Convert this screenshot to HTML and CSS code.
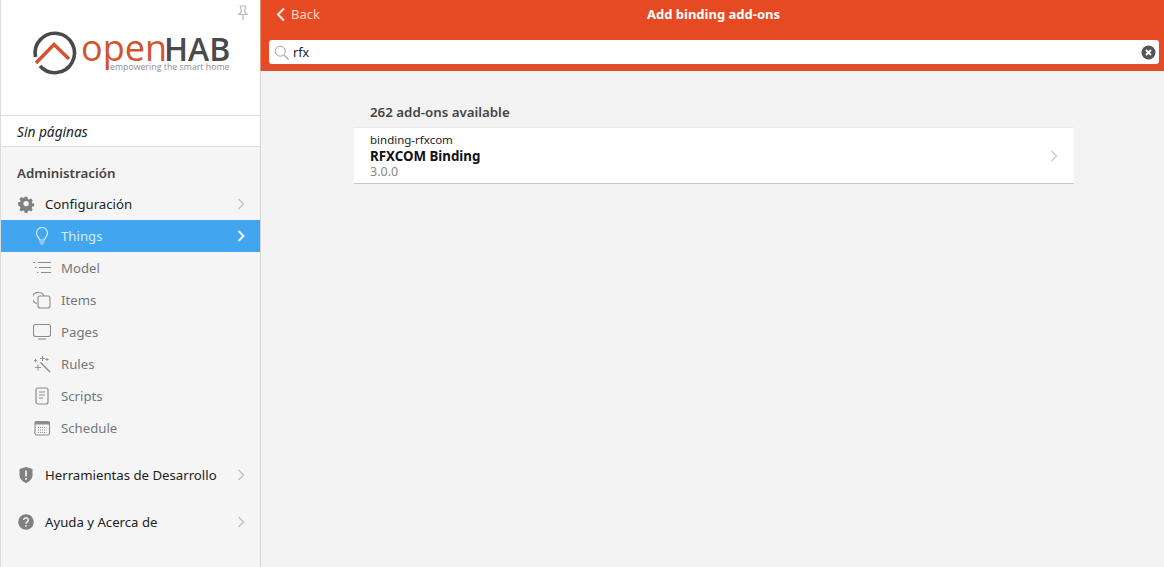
FILE: index.html
```html
<!DOCTYPE html>
<html lang="es">
<head>
<meta charset="utf-8">
<title>openHAB</title>
<link rel="stylesheet" href="styles.css">
</head>
<body>
<div class="app">
  <aside class="sidebar">
    <div class="logo-area">
      <svg class="pin" width="12" height="16" viewBox="0 0 12 16"><path d="M2.500 1h7M3.500 1.500 4.500 6.500 2 9.500h8L7.500 6.500 8.500 1.500M6 9.500V15" fill="none" stroke="#b9b9b9" stroke-width="1.200"/></svg>
      <svg class="logo" width="260" height="115" viewBox="0 0 260 115">
        <path d="M35.500 57A19.700 19.700 0 1 1 40 66" fill="none" stroke="#4a4a4a" stroke-width="3.600"/>
        <path d="M36 63 54 44.500 69 59" fill="none" stroke="#d2532e" stroke-width="3.400"/>
        <text class="logo-open" x="81" y="60.500">open</text>
        <text class="logo-hab" x="164" y="60.500">HAB</text>
        <text class="logo-tag" x="110" y="70">empowering the smart home</text>
      </svg>
    </div>
    <div class="pages-row">Sin páginas</div>
    <nav class="nav">
      <h2 class="nav-title">Administración</h2>
      <a class="row">
        <svg class="ico" width="18" height="18" viewBox="0 0 18 18"><path fill-rule="evenodd" d="M7.500 1.500h3l.5 2.300 1.300.6 2.100-1.200 2 2.100-1.200 2 .5 1.300 2.300.5v2.900l-2.300.5-.5 1.300 1.200 2-2 2.100-2.100-1.200-1.300.6-.5 2.300h-3l-.5-2.300-1.300-.6-2.100 1.200-2-2.100 1.200-2-.5-1.300L0 10.500V7.600l2.300-.5.500-1.300-1.200-2 2-2.100 2.100 1.200 1.300-.6zM9 6a3 3 0 1 0 0 6 3 3 0 0 0 0-6z" transform="translate(1 .5) scale(.9)" fill="#808080"/></svg>
        <span class="label">Configuración</span>
        <svg class="chev" width="8" height="12" viewBox="0 0 8 12"><path d="M1.500 1 6.500 6 1.500 11" fill="none" stroke="#c4c4c4" stroke-width="1.500"/></svg>
      </a>
      <a class="row sub active">
        <svg class="ico" width="18" height="18" viewBox="0 0 18 18"><path d="M6.500 13C6.300 10.500 3.500 9.500 3.500 6a5.500 5.500 0 0 1 11 0c0 3.500-2.800 4.500-3 7zM6.500 15h5M7.500 17h3" fill="none" stroke="#d4eeff" stroke-width="1.200"/></svg>
        <span class="label">Things</span>
        <svg class="chev" width="8" height="12" viewBox="0 0 8 12"><path d="M1.500 1 6.500 6 1.500 11" fill="none" stroke="#fff" stroke-width="1.800"/></svg>
      </a>
      <a class="row sub">
        <svg class="ico" width="18" height="18" viewBox="0 0 18 18"><path d="M5 3.500h13M6 8.500h12M8 13.500h10M0 3.500h2M2 8.500h1.500M4 13.500h1.500" fill="none" stroke="#8c8c8c" stroke-width="1"/></svg>
        <span class="label">Model</span>
      </a>
      <a class="row sub">
        <svg class="ico" width="18" height="18" viewBox="0 0 18 18"><path d="M4 12.500A5.500 5.500 0 0 1 6 1.500a5.500 5.500 0 0 1 5 3.500" fill="none" stroke="#8c8c8c" stroke-width="1.100"/><rect x="5" y="5" width="12" height="12" rx="2" fill="none" stroke="#8c8c8c" stroke-width="1.100"/></svg>
        <span class="label">Items</span>
      </a>
      <a class="row sub">
        <svg class="ico" width="18" height="18" viewBox="0 0 18 18"><rect x="0.500" y="1.500" width="17" height="12" rx="2" fill="none" stroke="#8c8c8c" stroke-width="1.100"/><path d="M5 16h8" stroke="#8c8c8c" stroke-width="1.100"/></svg>
        <span class="label">Pages</span>
      </a>
      <a class="row sub">
        <svg class="ico" width="18" height="18" viewBox="0 0 18 18"><path d="M7.500 7.500 17 17" stroke="#8c8c8c" stroke-width="1.400"/><path d="M5 9.500v6M2 12.500h6M9.500 1v5M7 3.500h5M2.500 4v3M1 5.500h3M14 3v3M12.500 4.500h3" stroke="#8c8c8c" stroke-width=".9"/></svg>
        <span class="label">Rules</span>
      </a>
      <a class="row sub">
        <svg class="ico" width="18" height="18" viewBox="0 0 18 18"><rect x="3" y="1" width="12" height="16" rx="2" fill="none" stroke="#8c8c8c" stroke-width="1.200"/><path d="M6 5h6M6 8h6M6 11h4" stroke="#8c8c8c" stroke-width="1"/></svg>
        <span class="label">Scripts</span>
      </a>
      <a class="row sub">
        <svg class="ico" width="18" height="18" viewBox="0 0 18 18"><rect x="2" y="2.500" width="14.500" height="13.500" rx="1.500" fill="none" stroke="#8c8c8c" stroke-width="1.100"/><path d="M2 3h14.500v2.500H2z" fill="#8c8c8c"/><path d="M5 8.500h8.500M5 11h8.500M5 13.500h8.500" stroke="#8c8c8c" stroke-width="1" stroke-dasharray="1 1"/></svg>
        <span class="label">Schedule</span>
      </a>
      <a class="row tools">
        <svg class="ico" width="18" height="18" viewBox="0 0 18 18"><path d="M9 1 15.500 3v6c0 3.800-2.800 6.500-6.500 8-3.700-1.500-6.500-4.200-6.500-8V3z" fill="#808080"/><path d="M9 4.500v6M9 12v1.800" stroke="#f4f4f4" stroke-width="1.700"/></svg>
        <span class="label">Herramientas de Desarrollo</span>
        <svg class="chev" width="8" height="12" viewBox="0 0 8 12"><path d="M1.500 1 6.500 6 1.500 11" fill="none" stroke="#c4c4c4" stroke-width="1.500"/></svg>
      </a>
      <a class="row help">
        <svg class="ico" width="18" height="18" viewBox="0 0 18 18"><circle cx="9" cy="9" r="7.800" fill="#808080"/><path d="M6.700 7a2.300 2.300 0 1 1 3.500 2c-.8.500-1.200.9-1.200 1.800M9 12v1.700" fill="none" stroke="#f4f4f4" stroke-width="1.500"/></svg>
        <span class="label">Ayuda y Acerca de</span>
        <svg class="chev" width="8" height="12" viewBox="0 0 8 12"><path d="M1.500 1 6.500 6 1.500 11" fill="none" stroke="#c4c4c4" stroke-width="1.500"/></svg>
      </a>
    </nav>
  </aside>
  <main class="main">
    <header class="header">
      <div class="topbar">
        <a class="back">
          <svg width="10" height="15" viewBox="0 0 10 15"><path d="M8 1.500 2 7.500 8 13.500" fill="none" stroke="#fbe3da" stroke-width="2.200"/></svg>
          <span>Back</span>
        </a>
        <div class="title">Add binding add-ons</div>
      </div>
      <div class="search">
        <svg width="15" height="15" viewBox="0 0 15 15"><circle cx="6.200" cy="6.200" r="5" fill="none" stroke="#a3a3a3" stroke-width="1"/><path d="M10 10l4.500 4.500" stroke="#a3a3a3" stroke-width="1.100"/></svg>
        <span class="query">rfx</span>
        <svg class="clear" width="15" height="15" viewBox="0 0 15 15"><circle cx="7.500" cy="7.500" r="7" fill="#555"/><path d="M5 5l5 5M10 5l-5 5" stroke="#fff" stroke-width="1.800"/></svg>
      </div>
    </header>
    <section class="content">
      <h3 class="count">262 add-ons available</h3>
      <div class="card">
        <div class="card-text">
          <div class="card-id">binding-rfxcom</div>
          <div class="card-name">RFXCOM Binding</div>
          <div class="card-ver">3.0.0</div>
        </div>
        <svg class="chev" width="8" height="12" viewBox="0 0 8 12"><path d="M1.500 1 6.500 6 1.500 11" fill="none" stroke="#c8c8c8" stroke-width="1.300"/></svg>
      </div>
    </section>
  </main>
</div>
</body>
</html>
```

FILE: styles.css
```css
* { box-sizing: border-box; }
html, body { margin: 0; height: 100%; overflow: hidden; }
body { font-family: "Noto Sans", sans-serif; font-size: 13.200px; color: #1f1f1f; background: #f3f3f3; }
.app { display: flex; height: 567px; }
.sidebar { width: 261px; flex: none; background: #f5f5f5; border-left: 1px solid #dcdcdc; border-right: 1px solid #d4d4d4; display: flex; flex-direction: column; }
.logo-area { position: relative; height: 116px; background: #fff; border-bottom: 1px solid #dedede; }
.logo { display: block; margin-left: -1px; }
.logo-open { font-family: "Open Sans", sans-serif; font-size: 36px; font-weight: 500; fill: #d2532e; }
.logo-hab { font-family: "Open Sans", sans-serif; font-size: 32px; font-weight: 600; fill: #4a4a4a; }
.logo-tag { font-family: "Open Sans", sans-serif; font-size: 8.800px; fill: #8f8f8f; }
.pin { position: absolute; top: 5px; right: 11px; }
.pages-row { height: 31px; background: #fff; border-bottom: 1px solid #dedede; padding-left: 16px; display: flex; align-items: center; font-style: italic; font-size: 13.700px; color: #222; }
.nav { display: flex; flex-direction: column; padding-top: 15px; }
.nav-title { margin: 0; height: 26px; padding-left: 16px; font-size: 13.300px; font-weight: 600; color: #444; line-height: 22px; }
.row { display: flex; align-items: center; height: 32px; padding: 0 15px 0 16px; gap: 10px; color: #222; white-space: nowrap; }
.row .label { flex: 1; line-height: 32px; height: 32px; }
.row .ico { flex: none; }
.row .chev { flex: none; }
.row.sub { padding-left: 32px; color: #777; gap: 10px; }
.row.active { background: #42a5f0; color: #d4eeff; }
.tools { margin-top: 15px; }
.help { margin-top: 15px; }
.main { flex: 1; display: flex; flex-direction: column; min-width: 0; }
.header { height: 71px; background: #e64a22; border-bottom: 7px solid #dc4f2a; box-shadow: -1px 0 0 #e8906f; display: flex; flex-direction: column; }
.topbar { position: relative; height: 40px; flex: none; display: flex; align-items: flex-start; padding: 6px 0 0 15px; }
.back { display: flex; align-items: center; gap: 5px; font-size: 13px; color: #fbd5c8; height: 16px; }
.back span { line-height: 16px; }
.title { position: absolute; left: 2px; right: 0; top: 5px; text-align: center; font-size: 13px; font-weight: 700; color: #fff; line-height: 18px; }
.search { margin: 0 5px 0 8px; height: 24px; flex: none; background: #fff; border-radius: 3px; display: flex; align-items: center; padding: 0 3px 0 5px; gap: 4px; }
.query { flex: 1; font-size: 12.500px; color: #222; }
.content { flex: 1; padding: 31px 90px 0 93px; }
.count { margin: 0; height: 25px; padding-left: 16px; font-size: 13.300px; font-weight: 600; color: #444; line-height: 20px; }
.card { display: flex; align-items: center; height: 57px; background: #fff; border-top: 1px solid #ececec; border-bottom: 1px solid #c8c8c8; padding: 0 16px; }
.card-text { flex: 1; display: flex; flex-direction: column; }
.card-id { font-size: 11.500px; line-height: 16px; color: #222; }
.card-name { font-size: 13.300px; font-weight: 700; line-height: 16px; color: #111; }
.card-ver { font-size: 12.500px; line-height: 16px; color: #888; }
```
